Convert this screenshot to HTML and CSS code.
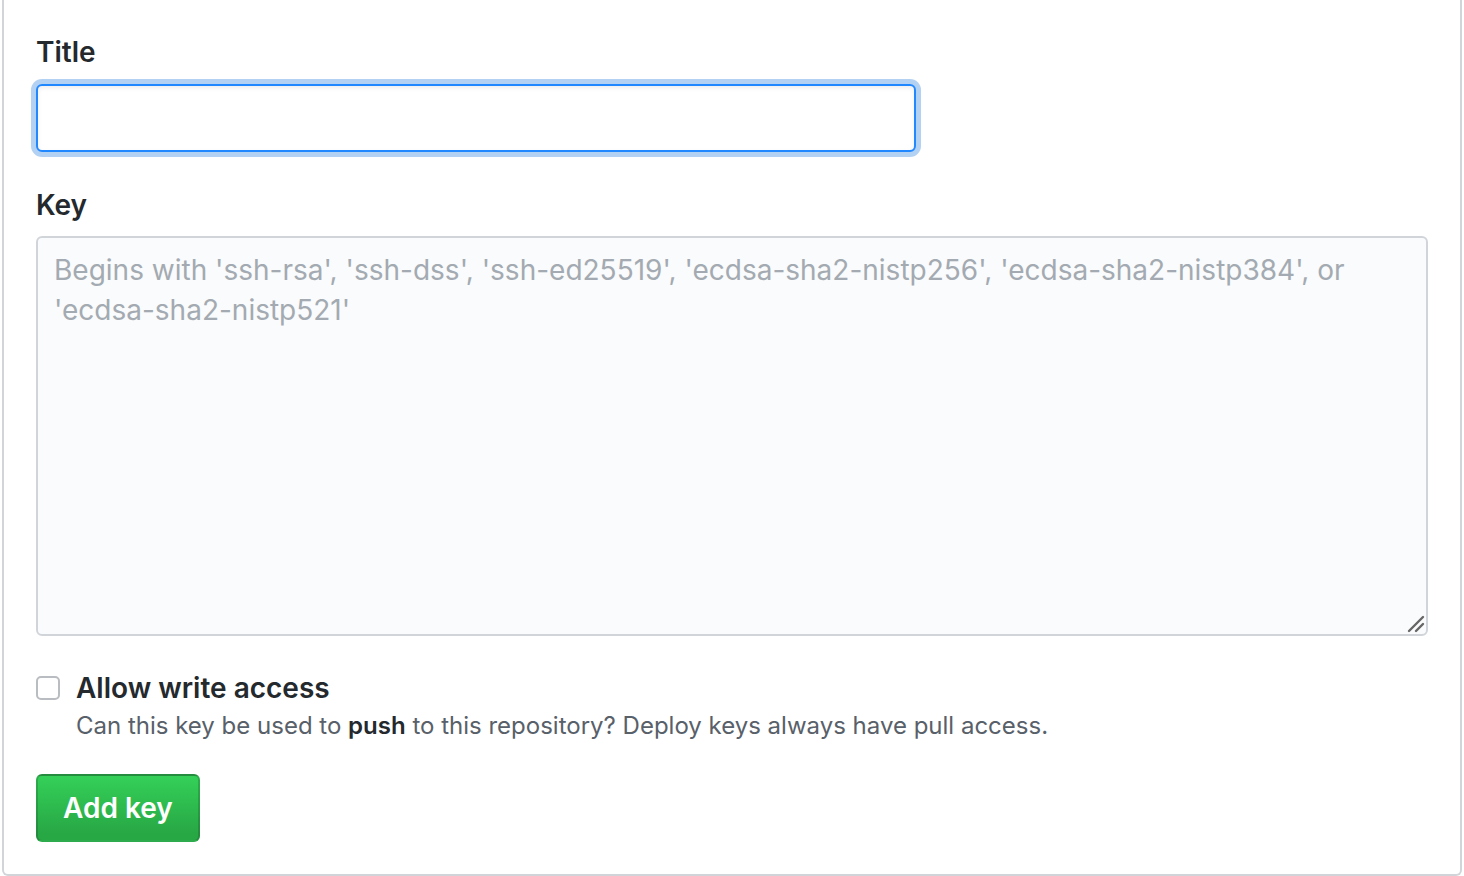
FILE: index.html
```html
<!DOCTYPE html>
<html lang="en">
<head>
  <meta charset="UTF-8">
  <title>Add deploy key</title>
  <link rel="stylesheet" href="styles.css">
</head>
<body>
  <form class="box" id="deployKeyForm">
    <div class="form-group">
      <label class="form-label" for="keyTitle">Title</label>
      <input type="text" id="keyTitle" class="input focused">
    </div>
    <div class="form-group">
      <label class="form-label key-label" for="keyBody">Key</label>
      <div class="textarea-wrap">
        <textarea id="keyBody" class="textarea" placeholder="Begins with 'ssh-rsa', 'ssh-dss', 'ssh-ed25519', 'ecdsa-sha2-nistp256', 'ecdsa-sha2-nistp384', or 'ecdsa-sha2-nistp521'"></textarea>
        <svg class="grip" width="18" height="18" viewBox="0 0 18 18">
          <line x1="2" y1="16" x2="16" y2="2" stroke="#666" stroke-width="2.4" stroke-linecap="round"/>
          <line x1="9" y1="16" x2="16" y2="9" stroke="#666" stroke-width="2.4" stroke-linecap="round"/>
        </svg>
      </div>
    </div>
    <div class="check-row">
      <input type="checkbox" id="readWrite" class="checkbox">
      <div class="check-text">
        <label for="readWrite" class="check-label">Allow write access</label>
        <p class="note">Can this key be used to <strong>push</strong> to this repository? Deploy keys always have pull access.</p>
      </div>
    </div>
    <button type="submit" class="btn-primary">Add key</button>
  </form>
</body>
</html>
```

FILE: styles.css
```css
html, body {
  margin: 0;
  padding: 0;
  background: #fff;
}
body {
  font-family: Inter, "Liberation Sans", Arial, sans-serif;
  color: #24292e;
  height: 876px;
  overflow: hidden;
}
.box {
  margin: 0 2px;
  height: 876px;
  box-sizing: border-box;
  padding: 31px 32px 32px;
  border: 2px solid #d1d5da;
  border-top: none;
  border-radius: 0 0 6px 6px;
}
.form-group {
  display: flex;
  flex-direction: column;
  align-items: flex-start;
}
.form-label {
  font-size: 28px;
  font-weight: 600;
  line-height: 42px;
  margin-bottom: 11px;
}
.key-label {
  margin-top: 32px;
  margin-bottom: 10px;
}
.input {
  width: 880px;
  height: 68px;
  box-sizing: border-box;
  padding: 0 16px;
  font-family: inherit;
  font-size: 28px;
  border: 2px solid #d1d5da;
  border-radius: 6px;
  background: #fff;
  outline: none;
}
.input.focused {
  border-color: #2188ff;
  box-shadow: inset 0 2px 4px rgba(27, 31, 35, 0.075), 0 0 0 5px rgba(3, 102, 214, 0.3);
}
.textarea-wrap {
  position: relative;
  width: 100%;
  height: 400px;
}
.textarea {
  display: block;
  width: 100%;
  height: 400px;
  box-sizing: border-box;
  padding: 12px 16px;
  font-family: inherit;
  font-size: 28px;
  line-height: 40px;
  color: #24292e;
  background: #fafbfc;
  border: 2px solid #d1d5da;
  border-radius: 6px;
  outline: none;
  resize: none;
}
.textarea::placeholder {
  color: #a3aab1;
}
.grip {
  position: absolute;
  right: 3px;
  bottom: 3px;
}
.check-row {
  display: flex;
  gap: 16px;
  margin-top: 31px;
}
.checkbox {
  appearance: none;
  width: 24px;
  height: 24px;
  margin: 9px 0 0;
  border: 2px solid #b9bcc0;
  border-radius: 5px;
  background: #fff;
}
.check-text {
  display: flex;
  flex-direction: column;
}
.check-label {
  font-size: 28px;
  font-weight: 600;
  line-height: 42px;
}
.note {
  margin: -1px 0 0;
  font-size: 24px;
  line-height: 36px;
  color: #586069;
}
.note strong {
  color: #24292e;
  font-weight: 600;
}
.btn-primary {
  margin-top: 30px;
  height: 68px;
  padding: 0 25px;
  font-family: inherit;
  font-size: 28px;
  font-weight: 600;
  color: #fff;
  background: linear-gradient(180deg, #34d058 0%, #28a745 90%);
  border: 2px solid rgba(27, 31, 35, 0.2);
  border-radius: 6px;
  cursor: pointer;
}
```
